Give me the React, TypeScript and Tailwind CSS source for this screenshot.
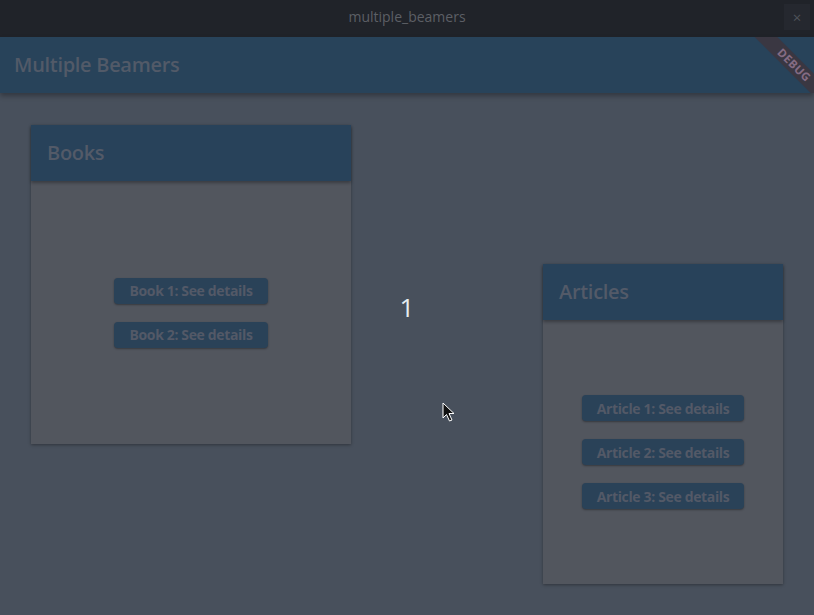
import React from 'react'

const font = { fontFamily: '"Open Sans", "Noto Sans", sans-serif' }

function Panel({ title, items, className }: { title: string; items: string[]; className: string }) {
  return (
    <div className={`flex flex-col bg-[#52565e] shadow-[0_1px_3px_rgba(0,0,0,0.35)] ${className}`}>
      <div className="h-14 shrink-0 bg-[#28425a] flex items-center px-4 shadow-[0_2px_3px_rgba(0,0,0,0.3)]">
        <span className="text-[20px] font-semibold text-[#535a68] tracking-[-0.3px]">{title}</span>
      </div>
      <div className="flex-1 flex flex-col items-center justify-center gap-[18px]">
        {items.map((t) => (
          <div
            key={t}
            className="h-[26px] px-[15px] rounded bg-[#2a4258] flex items-center shadow-[0_1px_2px_rgba(0,0,0,0.35)]"
          >
            <span className="text-[14px] font-bold text-[#535967] tracking-[-0.35px]">{t}</span>
          </div>
        ))}
      </div>
    </div>
  )
}

export default function App() {
  return (
    <div className="w-[814px] h-[615px] flex flex-col bg-[#48505c] overflow-hidden relative" style={font}>
      <div className="h-[37px] shrink-0 bg-[#202329] flex items-center justify-center relative">
        <span className="text-[14px] text-[#5c5f65] -mt-[4px]">multiple_beamers</span>
        <div className="absolute right-[4px] top-[4px] w-[26px] h-[26px] bg-[#25282f] flex items-center justify-center text-[#4f535a] text-[15px]">
          ×
        </div>
      </div>
      <div className="h-14 shrink-0 bg-[#28435a] flex items-center px-4 shadow-[0_3px_5px_rgba(0,0,0,0.3)] relative z-10 overflow-hidden">
        <span className="text-[20px] font-semibold text-[#525a68] tracking-[-0.3px] -ml-[2px]">Multiple Beamers</span>
        <div className="absolute right-[-42px] top-[20px] w-[124px] h-[16px] bg-[#3a3742] rotate-45 flex items-center justify-center">
          <span className="text-[11.5px] font-bold text-[#846c84] tracking-[0.3px] leading-none">DEBUG</span>
        </div>
      </div>
      <div className="flex-1 flex justify-between px-[31px] pt-8 pb-[31px]">
        <Panel title="Books" items={['Book 1: See details', 'Book 2: See details']} className="w-[320px] h-[319px] self-start" />
        <div className="flex-1 flex justify-center pt-[169px] pr-[80px]">
          <span className="text-[26px] text-[#e6ecf0] leading-none h-fit">1</span>
        </div>
        <Panel
          title="Articles"
          items={['Article 1: See details', 'Article 2: See details', 'Article 3: See details']}
          className="w-[240px] h-[320px] self-end"
        />
      </div>
      <svg className="absolute left-[442px] top-[402px]" width="14" height="20" viewBox="0 0 14 20">
        <path d="M1 1 L1 16 L4.5 12.5 L7.5 19 L10 18 L7 11.5 L12 11.5 Z" fill="#111" stroke="#fff" strokeWidth="1" />
      </svg>
    </div>
  )
}
